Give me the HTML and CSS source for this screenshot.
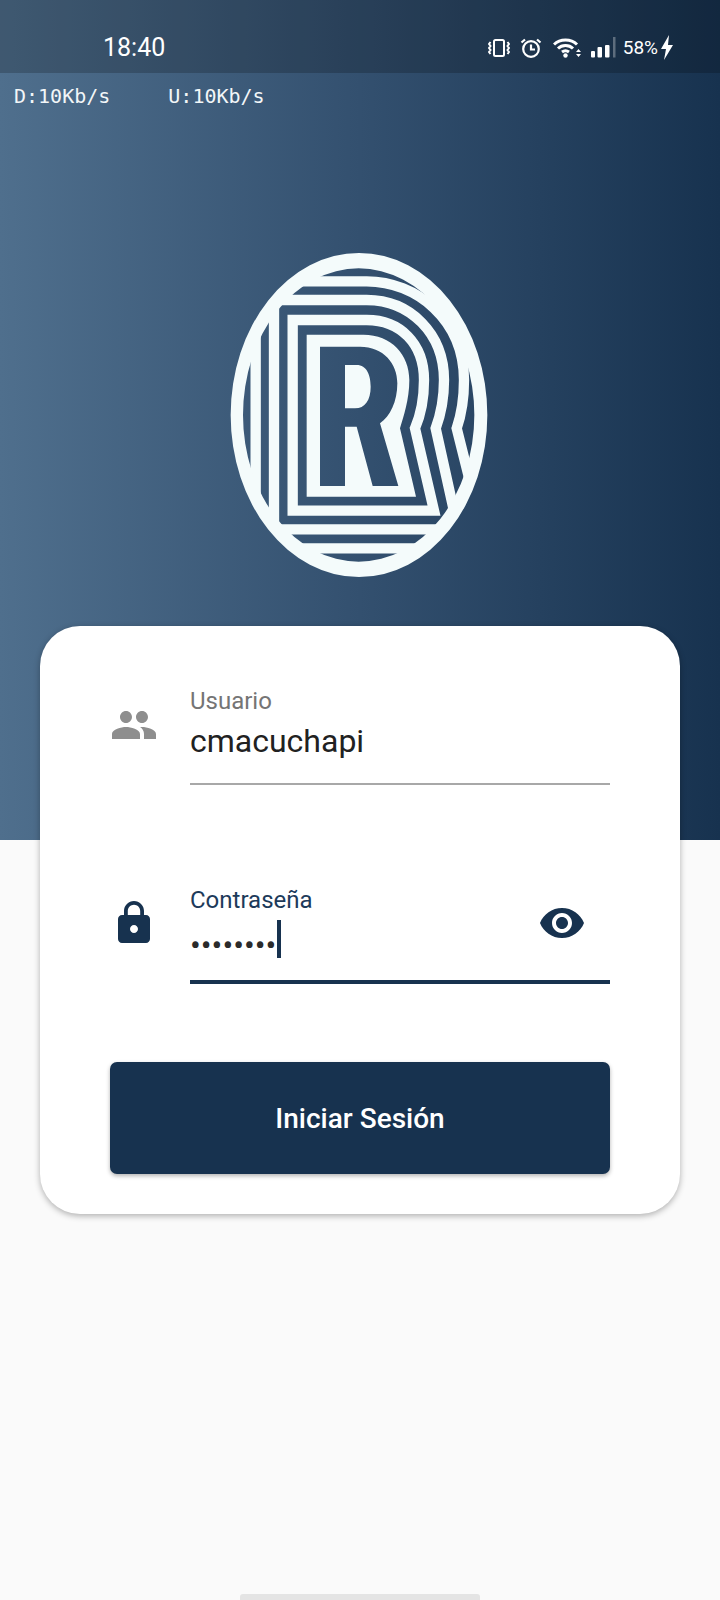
FILE: index.html
```html
<!DOCTYPE html>
<html lang="es">
<head>
    <meta charset="UTF-8">
    <meta name="viewport" content="width=device-width, initial-scale=1.0">
    <title>Iniciar Sesión</title>
    <link rel="stylesheet" href="styles.css">
</head>
<body>
    <div class="page">
        <div class="hero">
            <div class="status-bar">
                <span class="time">18:40</span>
                <div class="status-icons">
                    <svg class="ic-vibrate" viewBox="0 0 22 18" width="22" height="18" fill="none" stroke="#fff" stroke-width="2">
                        <rect x="6" y="1" width="10" height="16" rx="1.5"/>
                        <path d="M2.5 3 L1 5 L2.5 7 L1 9 L2.5 11 L1 13 L2.5 15 M19.5 3 L21 5 L19.5 7 L21 9 L19.5 11 L21 13 L19.5 15"/>
                    </svg>
                    <svg class="ic-alarm" viewBox="0 0 22 20" width="22" height="20" fill="none" stroke="#fff" stroke-width="2.2">
                        <circle cx="11" cy="11" r="7.8"/>
                        <path d="M11 6.5 V11.5 H15 M1.5 4.5 L5 1.5 M20.5 4.5 L17 1.5"/>
                    </svg>
                    <svg class="ic-wifi" viewBox="0 0 28 20" width="28" height="20" fill="none" stroke="#fff" stroke-width="3">
                        <path d="M1 6.5 C7 0.5 18 0.5 24 6.5 M5 10.5 C9 6.5 16 6.5 20 10.5 M9 14 C11 12.5 14 12.5 16 14"/>
                        <circle cx="12.5" cy="17.5" r="2.2" fill="#fff" stroke="none"/>
                        <path d="M25.5 11 L23 14 H28 Z M25.5 19 L23 16 H28 Z" fill="#fff" stroke="none"/>
                    </svg>
                    <svg class="ic-signal" viewBox="0 0 26 21" width="26" height="21">
                        <rect x="1" y="14" width="4" height="6.500" rx="1" fill="#fff"/>
                        <rect x="7.500" y="10" width="4.500" height="10.500" rx="1" fill="#fff"/>
                        <rect x="15" y="8" width="4.500" height="12.500" rx="1" fill="#fff"/>
                        <rect x="23" y="0" width="2.500" height="20.500" fill="#fff" opacity="0.3"/>
                    </svg>
                    <span class="battery">58%</span>
                    <svg class="ic-bolt" viewBox="0 0 14 25" width="14" height="25">
                        <path d="M9 0 L1 14 H6 L4 25 L13 10 H8 Z" fill="#fff"/>
                    </svg>
                </div>
            </div>
            <div class="speed-row">
                <span class="speed">D:10Kb/s</span>
                <span class="speed">U:10Kb/s</span>
            </div>
            <div class="logo-wrap">
                <svg class="logo" viewBox="0 0 900 1050" width="300" height="350">
                    <defs>
                        <clipPath id="egg">
                            <ellipse cx="446" cy="525" rx="370" ry="474"/>
                        </clipPath>
                    </defs>
                    <g clip-path="url(#egg)" fill="none" stroke="#f4fbfb" stroke-width="31">
                        <path d="M248 812 H672 L615 565 C630 530 642 480 642 420 C642 310 570 240 470 240 H248 Z"/>
                        <path d="M192 868 H744 L677 565 C690 530 702 480 702 420 C702 280 600 180 470 180 H192 Z"/>
                        <path d="M137 925 H830 L740 565 C752 530 762 480 762 420 C762 240 620 124 470 124 H137 Z"/>
                    </g>
                    <path fill="#f4fbfb" fill-rule="evenodd" d="M62 525 A385 486 0 1 0 832 525 A385 486 0 1 0 62 525 Z M99 525 A347 440 0 1 1 793 525 A347 440 0 1 1 99 525 Z"/>
                    <path fill="#f4fbfb" fill-rule="evenodd" d="M290 770 V284 H460 C545 284 598 345 598 420 C598 480 580 530 570 565 L618 770 Z M330 738 V320 H450 C520 320 562 370 562 430 C562 485 540 530 510 550 L565 738 H488 L440 560 H405 V738 Z M405 375 V505 H435 C465 505 482 480 482 440 C482 405 470 375 440 375 Z"/>
                </svg>
            </div>
        </div>

        <div class="card">
            <div class="field">
                <svg class="field-icon icon-grey" viewBox="0 0 24 24" width="48" height="48">
                    <path d="M16 11c1.66 0 2.99-1.34 2.99-3S17.66 5 16 5c-1.66 0-3 1.34-3 3s1.34 3 3 3zm-8 0c1.66 0 2.99-1.34 2.99-3S9.66 5 8 5C6.34 5 5 6.34 5 8s1.34 3 3 3zm0 2c-2.33 0-7 1.17-7 3.5V19h14v-2.5c0-2.33-4.67-3.5-7-3.5zm8 0c-.29 0-.62.02-.97.05 1.16.84 1.97 1.97 1.97 3.45V19h6v-2.5c0-2.33-4.67-3.5-7-3.5z"/>
                </svg>
                <div class="field-body">
                    <label class="field-label">Usuario</label>
                    <div class="field-value">cmacuchapi</div>
                </div>
            </div>

            <div class="field field-active">
                <svg class="field-icon icon-navy" viewBox="0 0 24 24" width="48" height="48">
                    <path d="M18 8h-1V6c0-2.76-2.24-5-5-5S7 3.24 7 6v2H6c-1.1 0-2 .9-2 2v10c0 1.1.9 2 2 2h12c1.1 0 2-.9 2-2V10c0-1.1-.9-2-2-2zm-6 9c-1.1 0-2-.9-2-2s.9-2 2-2 2 .9 2 2-.9 2-2 2zm3.1-9H8.9V6c0-1.71 1.39-3.1 3.1-3.1 1.71 0 3.1 1.39 3.1 3.1v2z"/>
                </svg>
                <div class="field-body">
                    <label class="field-label">Contraseña</label>
                    <div class="field-value password">
                        <span class="dots">••••••••</span><span class="caret"></span>
                        <svg class="eye icon-navy" viewBox="0 0 24 24" width="48" height="48">
                            <path d="M12 4.5C7 4.5 2.73 7.61 1 12c1.73 4.39 6 7.5 11 7.5s9.27-3.11 11-7.5c-1.73-4.39-6-7.5-11-7.5zM12 17c-2.76 0-5-2.24-5-5s2.24-5 5-5 5 2.24 5 5-2.24 5-5 5zm0-8c-1.66 0-3 1.34-3 3s1.34 3 3 3 3-1.34 3-3-1.34-3-3-3z"/>
                        </svg>
                    </div>
                </div>
            </div>

            <button class="login-btn">Iniciar Sesión</button>
        </div>

        <div class="home-bar"></div>
    </div>
</body>
</html>
```

FILE: styles.css
```css
body {
    font-family: 'Roboto', sans-serif;
    margin: 0;
    padding: 0;
    background-color: #fafafa;
    color: #212121;
}
.page {
    height: 1600px;
    display: flex;
    flex-direction: column;
    overflow: hidden;
}
.hero {
    height: 840px;
    flex-shrink: 0;
    background: linear-gradient(to right, #4f6f8d 0%, #33506f 50%, #17324f 100%);
}
.status-bar {
    height: 73px;
    box-sizing: border-box;
    display: flex;
    align-items: center;
    padding: 22px 46px 0 103px;
    background-color: rgba(0, 0, 0, 0.2);
    color: #fff;
}
.time {
    font-size: 25px;
}
.status-icons {
    margin-left: auto;
    display: flex;
    align-items: center;
}
.ic-vibrate {
    margin-right: 10px;
}
.ic-alarm {
    margin-right: 11px;
}
.ic-wifi {
    margin-right: 9px;
}
.ic-signal {
    margin-right: 7px;
}
.battery {
    font-size: 19px;
    margin-right: 2px;
}
.speed-row {
    display: flex;
    gap: 58px;
    padding: 11px 0 0 14px;
}
.speed {
    font-family: 'DejaVu Sans Mono', monospace;
    font-size: 20px;
    line-height: 24px;
    color: #f2f6f8;
}
.logo-wrap {
    display: flex;
    justify-content: center;
    padding-top: 132px;
}
.logo {
    display: block;
    filter: blur(0.5px);
}
.card {
    position: relative;
    margin: -214px 40px 0;
    height: 588px;
    box-sizing: border-box;
    padding: 61px 70px 40px;
    background-color: #fff;
    border-radius: 40px;
    box-shadow: 0 2px 6px rgba(0, 0, 0, 0.3);
    flex-shrink: 0;
}
.field {
    display: flex;
    gap: 32px;
    height: 199px;
}
.field-icon {
    margin-top: 14px;
    flex-shrink: 0;
}
.icon-grey {
    fill: #8e8e8e;
}
.icon-navy {
    fill: #17324f;
}
.field-body {
    flex: 1;
}
.field-label {
    display: block;
    font-size: 24px;
    line-height: 28px;
    color: #757575;
}
.field-value {
    height: 70px;
    box-sizing: border-box;
    font-size: 32px;
    line-height: 46px;
    padding-top: 3px;
    border-bottom: 2px solid #a8a8a8;
}
.field-active {
    height: 176px;
}
.field-active .field-icon {
    margin-top: 13px;
}
.field-active .field-label {
    color: #1d3a5a;
}
.password {
    display: flex;
    align-items: flex-start;
    border-bottom: 4px solid #17324f;
}
.dots {
    font-size: 32px;
    margin: 5px 1px 0 0;
    color: #2b2b2b;
}
.caret {
    width: 4px;
    height: 38px;
    margin-top: 3px;
    background-color: #17324f;
}
.eye {
    margin-left: auto;
    margin-right: 24px;
    margin-top: -18px;
}
.login-btn {
    display: block;
    width: 100%;
    height: 112px;
    border: none;
    border-radius: 7px;
    background-color: #17324f;
    color: #fff;
    font-family: 'Roboto', sans-serif;
    font-size: 28px;
    font-weight: 500;
    box-shadow: 0 2px 4px rgba(0, 0, 0, 0.3);
}
.home-bar {
    width: 240px;
    height: 6px;
    margin: auto auto 0;
    background-color: #e4e4e4;
    border-radius: 3px 3px 0 0;
}
```
